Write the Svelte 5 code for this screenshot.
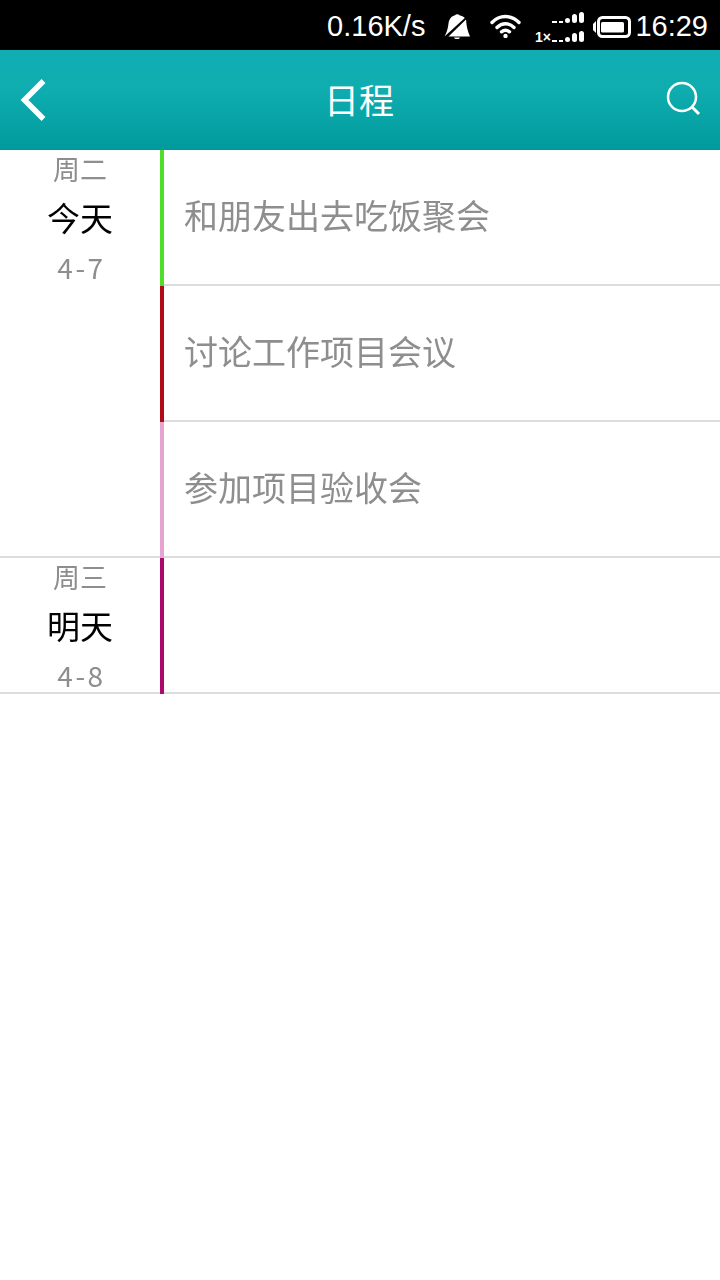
<script>
  const days = [
    { week: '周二', name: '今天', date: '4-7', items: [
      { text: '和朋友出去吃饭聚会', color: '#4fdf2a' },
      { text: '讨论工作项目会议', color: '#b30a18' },
      { text: '参加项目验收会', color: '#e8a4d0' }
    ]},
    { week: '周三', name: '明天', date: '4-8', items: [
      { text: '', color: '#ab0a6c' }
    ]}
  ];
</script>

<div class="page">
  <div class="status">
    <span class="speed">0.16K/s</span>
    <svg class="bell" width="26" height="26" viewBox="0 0 26 26" fill="#fff">
      <path d="M0.500 23.500C3 19 4 15 4.500 10.500C5 6.500 7.500 3 11 2.300C12 .8 14.500 .8 15.500 2.300C17.500 2.700 19.500 3.600 20.800 5z"/>
      <path d="M22 6.500C22.500 13 23.500 18 26 23.500H4.500z"/>
      <path d="M10 24.500h6c-.5 1.200-1.500 1.700-3 1.700s-2.500-.5-3-1.700z"/>
    </svg>
    <svg class="wifi" width="31" height="24" viewBox="0 0 31 24" fill="none" stroke="#fff" stroke-width="3.400" stroke-linecap="round">
      <path d="M2 8.500C9.500 .5 21.500 .5 29 8.500"/>
      <path d="M7 13.500C12 8.500 19 8.500 24 13.500"/>
      <path d="M11.500 17.800C14 15.800 17 15.800 19.500 17.800"/>
      <circle cx="15.500" cy="22" r="2.200" fill="#fff" stroke="none"/>
    </svg>
    <svg class="signal" width="50" height="31" viewBox="0 0 50 31" fill="#fff">
      <rect x="18" y="9" width="5" height="2"/><rect x="25" y="9" width="4" height="2"/>
      <rect x="31" y="6" width="5" height="5" rx="2.500"/><rect x="38" y="2" width="5" height="9" rx="2.500"/><rect x="45" y="0" width="5" height="11" rx="2.500"/>
      <rect x="18" y="28" width="5" height="2"/><rect x="25" y="28" width="4" height="2"/>
      <rect x="31" y="25" width="5" height="5" rx="2.500"/><rect x="38" y="21" width="5" height="9" rx="2.500"/><rect x="45" y="19" width="5" height="11" rx="2.500"/>
      <text x="1" y="29.500" class="sim">1×</text>
    </svg>
    <svg class="battery" width="38" height="22" viewBox="0 0 38 22">
      <path d="M3 5L0 8v6l3 3z" fill="#fff"/>
      <rect x="5.500" y="1.500" width="31" height="19" rx="4" fill="none" stroke="#fff" stroke-width="3"/>
      <rect x="8" y="6" width="23" height="10.500" rx="1.500" fill="#fff"/>
    </svg>
    <span class="time">16:29</span>
  </div>

  <header class="bar">
    <svg class="back" width="30" height="44" viewBox="0 0 30 44" fill="none" stroke="#fff" stroke-width="5.500">
      <path d="M24.500 3L5.500 22l19 19"/>
    </svg>
    <h1>日程</h1>
    <svg class="search" width="36" height="36" viewBox="0 0 36 36" fill="none" stroke="#fff" stroke-width="2.500">
      <circle cx="17" cy="17" r="14"/>
      <path d="M27 27l7 7" stroke-width="3"/>
    </svg>
  </header>

  <main>
    {#each days as day}
      <section class="day">
        <div class="label">
          <div class="week">{day.week}</div>
          <div class="name">{day.name}</div>
          <div class="date">{day.date}</div>
        </div>
        <div class="items">
          {#each day.items as item}
            <div class="item">
              <div class="stripe" style="background: {item.color}"></div>
              <div class="text">{item.text}</div>
            </div>
          {/each}
        </div>
      </section>
    {/each}
  </main>
</div>

<style>
  :global(body) {
    margin: 0;
    background: #fff;
  }
  .page {
    width: 720px;
    height: 1280px;
    font-family: "Noto Sans CJK SC", "Liberation Sans", sans-serif;
    overflow: hidden;
    background: #fff;
  }
  .status {
    height: 50px;
    background: #000;
    color: #fff;
    display: flex;
    align-items: center;
    justify-content: flex-end;
    padding-right: 12px;
    font-family: "Liberation Sans", sans-serif;
    font-size: 29px;
    box-sizing: border-box;
  }
  .speed { margin-right: 19px; margin-top: 2px; }
  .time { margin-top: 2px; }
  .bell { margin-right: 20px; margin-top: 2px; }
  .wifi { margin-right: 13px; margin-top: 2px; }
  .signal { margin-right: 9px; margin-top: 5px; }
  .sim {
    font-family: "Liberation Sans", sans-serif;
    font-size: 14px;
    font-weight: 700;
  }
  .battery { margin-right: 4px; margin-top: 4px; }
  .bar {
    height: 100px;
    background: linear-gradient(#10aeb2 0%, #0fadb0 40%, #009a9c 100%);
    display: flex;
    align-items: center;
    justify-content: space-between;
    padding: 0 19px;
    box-sizing: border-box;
  }
  h1 {
    margin: 0 0 2px 4px;
    color: #fff;
    font-size: 35px;
    font-weight: 400;
    line-height: 98px;
  }
  .search { margin-right: 0; margin-top: -4px; }
  .day {
    display: flex;
    align-items: flex-start;
    position: relative;
  }
  .label {
    width: 160px;
    height: 136px;
    flex: none;
    text-align: center;
  }
  .day::after {
    content: "";
    position: absolute;
    left: 0;
    width: 160px;
    bottom: 0;
    height: 2px;
    background: #dcdcdc;
  }
  .week, .date {
    color: #8e8e8e;
    font-size: 27px;
    will-change: transform;
  }
  .week { line-height: 38px; }
  .name {
    color: #000;
    font-size: 33px;
    line-height: 54px;
    margin-top: 2px;
    will-change: transform;
  }
  .date {
    margin-top: 6px;
    line-height: 34px;
    font-size: 28px;
    letter-spacing: 2.500px;
    padding-left: 3px;
  }
  .items { flex: 1; }
  .item {
    height: 136px;
    display: flex;
  }
  .stripe {
    width: 4px;
    flex: none;
  }
  .text {
    flex: 1;
    box-sizing: border-box;
    border-bottom: 2px solid #dcdcdc;
    padding: 0 0 6px 20px;
    display: flex;
    align-items: center;
    font-size: 34px;
    color: #8e8e8e;
    will-change: transform;
  }
</style>
